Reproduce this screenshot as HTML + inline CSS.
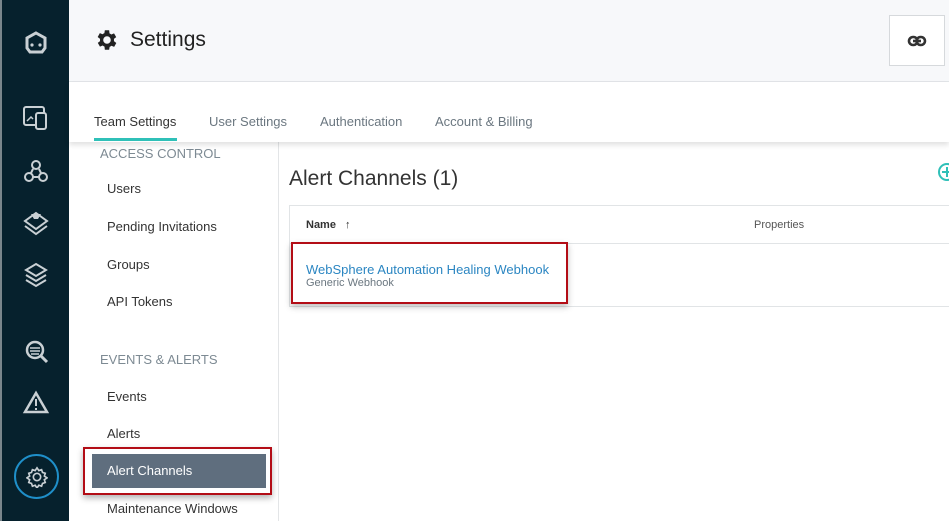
<!DOCTYPE html>
<html><head><meta charset="utf-8"><style>
*{box-sizing:border-box;margin:0;padding:0}
body{width:949px;height:521px;overflow:hidden;background:#fff;font-family:"Liberation Sans",sans-serif;position:relative}
.side{position:absolute;left:0;top:0;width:69px;height:521px;background:#06212d;border-left:2px solid #7a868c}
.side svg{position:absolute;left:20px}
.hdr{position:absolute;left:69px;top:0;right:0;height:82px;background:#f7f8fa;border-bottom:1px solid #e2e5e8}
.hdr h1{position:absolute;left:61px;top:28px;font-size:21px;font-weight:normal;color:#222}
.link{position:absolute;left:820px;top:15px;width:56px;height:51px;background:#fff;border:1px solid #d6d9dc}
.tabs{position:absolute;left:69px;top:82px;right:0;height:60px;background:#fff;box-shadow:0 3px 5px rgba(0,0,0,.12);z-index:2}
.tab{position:absolute;top:32px;font-size:13px;color:#6b7780}
.tab.a{color:#333}
.uline{position:absolute;left:25px;top:56px;width:83px;height:3px;background:#2fc0b8}
.nav{position:absolute;left:69px;top:142px;width:210px;height:379px;border-right:1px solid #e3e5e7}
.nh{position:absolute;left:31px;font-size:13px;color:#7d8a93}
.ni{position:absolute;left:38px;font-size:13px;color:#333}
.sel{position:absolute;left:23px;top:312px;width:174px;height:34px;background:#5f6e7e;color:#fff;font-size:13px;padding:9px 0 0 15px}
.redsel{position:absolute;left:14px;top:305px;width:189px;height:48px;border:2px solid #b30d16;box-shadow:0 3px 6px rgba(0,0,0,.3)}
.ch{position:absolute;left:289px;top:167px;font-size:21px;color:#333}
.tbl{position:absolute;left:289px;top:205px;width:670px;height:102px;border:1px solid #e1e4e6}
.th{position:absolute;top:13px;font-size:11px;line-height:13px}
.row{position:absolute;left:0;right:0;top:37px;border-top:1px solid #e1e4e6}
.red2{position:absolute;left:291px;top:242px;width:277px;height:62px;border:2px solid #b30d16;box-shadow:0 3px 6px rgba(0,0,0,.25)}
</style></head><body>
<div class="side">
<svg style="top:30px" width="28" height="28" viewBox="0 0 28 28"><path d="M14 3l9 5v10l-3 4H8l-3-4V8z" fill="none" stroke="#c9d0d4" stroke-width="3"/><circle cx="10" cy="15" r="1.6" fill="#c9d0d4"/><circle cx="18" cy="15" r="1.6" fill="#c9d0d4"/></svg>
<svg style="top:104px" width="28" height="28" viewBox="0 0 28 28"><rect x="2" y="3" width="20" height="18" rx="2" fill="none" stroke="#c9d0d4" stroke-width="2"/><rect x="14" y="9" width="10" height="16" rx="2" fill="#06212d" stroke="#c9d0d4" stroke-width="2"/><path d="M5 17l4-4 2 2" stroke="#c9d0d4" fill="none" stroke-width="1.5"/></svg>
<svg style="top:157px" width="28" height="28" viewBox="0 0 28 28"><circle cx="14" cy="8" r="4" fill="none" stroke="#c9d0d4" stroke-width="2"/><circle cx="7" cy="20" r="4" fill="none" stroke="#c9d0d4" stroke-width="2"/><circle cx="21" cy="20" r="4" fill="none" stroke="#c9d0d4" stroke-width="2"/><path d="M11 12l-2 4M17 12l2 4M11 20h6" stroke="#c9d0d4" stroke-width="2"/></svg>
<svg style="top:209px" width="28" height="28" viewBox="0 0 28 28"><path d="M14 4l11 8-11 8-11-8z" fill="none" stroke="#c9d0d4" stroke-width="2"/><path d="M9 5h10l-3 5h-4z" fill="#c9d0d4"/><path d="M3 17l11 8 11-8" fill="none" stroke="#c9d0d4" stroke-width="2"/></svg>
<svg style="top:261px" width="28" height="28" viewBox="0 0 28 28"><path d="M14 3l10 6-10 6-10-6z" fill="none" stroke="#c9d0d4" stroke-width="2"/><path d="M4 14l10 6 10-6M4 19l10 6 10-6" fill="none" stroke="#c9d0d4" stroke-width="2"/></svg>
<svg style="top:337px" width="28" height="28" viewBox="0 0 28 28"><circle cx="13" cy="13" r="8" fill="none" stroke="#c9d0d4" stroke-width="2.5"/><path d="M8 11h10M8 14h10M9 17h8" stroke="#c9d0d4" stroke-width="1.5"/><path d="M19 19l6 6" stroke="#c9d0d4" stroke-width="3"/></svg>
<svg style="top:389px" width="28" height="28" viewBox="0 0 28 28"><path d="M14 4l11 19H3z" fill="none" stroke="#c9d0d4" stroke-width="2.5"/><path d="M14 10v7M14 19v2" stroke="#c9d0d4" stroke-width="2"/></svg>
<div style="position:absolute;left:12px;top:454px;width:45px;height:45px;border-radius:50%;border:2px solid #1f8fc9"></div>
<svg style="top:466px;left:24px" width="22" height="22" viewBox="0 0 24 24"><path d="M12 2l2 3 3-1 1 3 3 1-1 3 3 2-3 2 1 3-3 1-1 3-3-1-2 3-2-3-3 1-1-3-3-1 1-3-3-2 3-2-1-3 3-1 1-3 3 1z" fill="none" stroke="#c9d0d4" stroke-width="1.8"/><circle cx="12" cy="12" r="4" fill="none" stroke="#c9d0d4" stroke-width="1.8"/></svg>
</div>
<div class="hdr">
<svg style="position:absolute;left:25px;top:27px" width="26" height="26" viewBox="0 0 24 24"><path fill="#222" d="M19.4 13a7.5 7.5 0 000-2l2.1-1.6-2-3.5-2.5 1a7 7 0 00-1.7-1L15 3h-4l-.4 2.7a7 7 0 00-1.7 1l-2.5-1-2 3.5L6.6 11a7.5 7.5 0 000 2l-2.1 1.6 2 3.5 2.5-1a7 7 0 001.7 1L11 21h4l.4-2.7a7 7 0 001.7-1l2.5 1 2-3.5zM13 15.5a3.5 3.5 0 110-7 3.5 3.5 0 010 7z" transform="translate(-1 0)"/></svg>
<h1>Settings</h1>
<div class="link"><svg style="position:absolute;left:17px;top:17px" width="20" height="16" viewBox="0 0 20 16"><rect x="2" y="4" width="8.5" height="8" rx="4" fill="none" stroke="#333" stroke-width="2.6"/><rect x="9.5" y="4" width="8.5" height="8" rx="4" fill="none" stroke="#333" stroke-width="2.6"/><path d="M6 8h8" stroke="#333" stroke-width="2.6"/></svg></div>
</div>
<div class="tabs">
<span class="tab a" style="left:25px">Team Settings</span>
<span class="tab" style="left:140px">User Settings</span>
<span class="tab" style="left:251px">Authentication</span>
<span class="tab" style="left:366px">Account &amp; Billing</span>
<div class="uline"></div>
</div>
<div class="nav">
<div class="nh" style="top:4px">ACCESS CONTROL</div>
<div class="ni" style="top:39px">Users</div>
<div class="ni" style="top:77px">Pending Invitations</div>
<div class="ni" style="top:115px">Groups</div>
<div class="ni" style="top:152px">API Tokens</div>
<div class="nh" style="top:210px">EVENTS &amp; ALERTS</div>
<div class="ni" style="top:247px">Events</div>
<div class="ni" style="top:284px">Alerts</div>
<div class="redsel"></div>
<div class="sel">Alert Channels</div>
<div class="ni" style="top:359px">Maintenance Windows</div>
</div>
<div class="ch">Alert Channels (1)</div>
<svg style="position:absolute;left:937px;top:162px" width="20" height="20" viewBox="0 0 20 20"><circle cx="10" cy="10" r="8" fill="none" stroke="#2fc0b8" stroke-width="2"/><path d="M10 5v10M5 10h10" stroke="#2fc0b8" stroke-width="2"/></svg>
<div class="tbl">
<div class="th" style="left:16px;font-weight:bold;color:#333">Name <span style="margin-left:6px;font-weight:bold">&#8593;</span></div>
<div class="th" style="left:464px;color:#555">Properties</div>
<div class="row">
<div style="position:absolute;left:16px;top:18px;font-size:13px;color:#2b86c2">WebSphere Automation Healing Webhook</div>
<div style="position:absolute;left:16px;top:33px;font-size:11px;color:#6b7780">Generic Webhook</div>
</div>
</div>
<div class="red2"></div>
</body></html>
